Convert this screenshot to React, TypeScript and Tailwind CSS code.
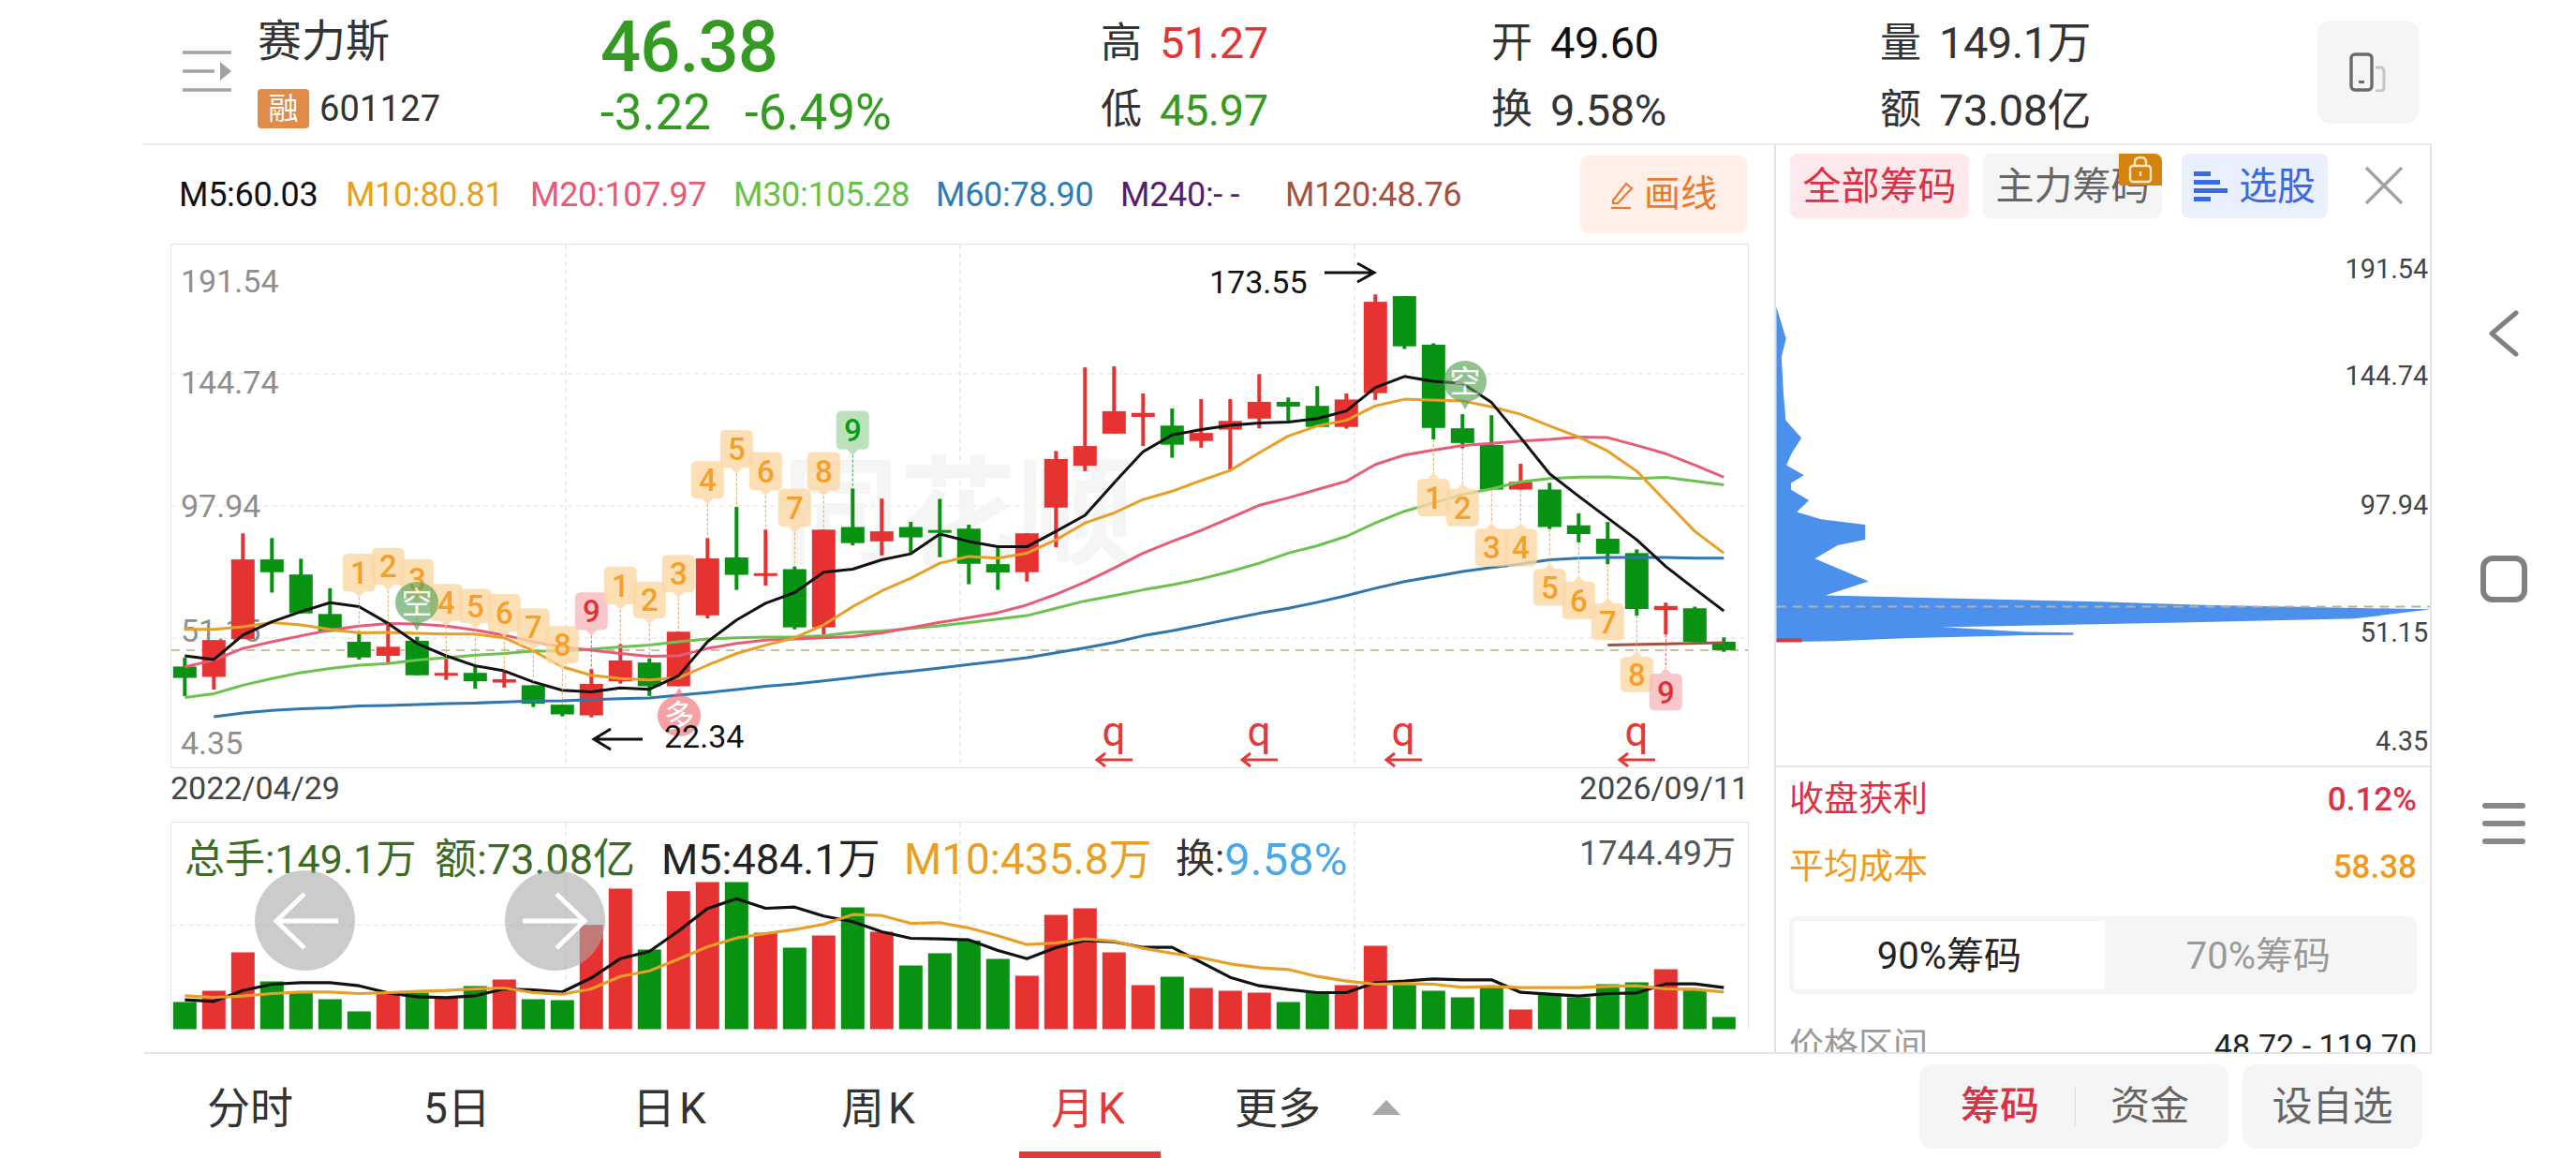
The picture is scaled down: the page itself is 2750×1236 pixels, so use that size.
import React from "react";

const Y = (z: number) => 260 + z / 2.8;
const VY = (z: number) => 860 + z / 3;
const CX = (i: number) => 197.3 + 31 * i;
const RED = "#e73232";
const GREEN = "#079311";

// colour, high, body top, body bottom, low (in reference-crop units)
const candles: [string, number, number, number, number][] = [
  ["G", 1237, 1264, 1298, 1352], ["R", 1185, 1185, 1295, 1333], ["R", 866, 944, 1182, 1182], ["G", 880, 944, 982, 1043],
  ["G", 942, 989, 1105, 1105], ["G", 1030, 1107, 1160, 1160], ["G", 1158, 1190, 1237, 1243], ["R", 1140, 1205, 1232, 1255],
  ["G", 1175, 1187, 1290, 1290], ["R", 1235, 1283, 1291, 1304], ["G", 1262, 1283, 1308, 1330], ["R", 1278, 1302, 1312, 1327],
  ["G", 1320, 1320, 1375, 1385], ["G", 1378, 1378, 1407, 1413], ["R", 1272, 1316, 1410, 1416], ["R", 1197, 1246, 1308, 1315],
  ["G", 1240, 1252, 1323, 1352], ["R", 1160, 1160, 1323, 1323], ["R", 880, 941, 1111, 1120], ["G", 787, 938, 990, 1035],
  ["R", 855, 985, 992, 1022], ["G", 965, 973, 1147, 1153], ["R", 855, 855, 1147, 1168], ["G", 732, 847, 895, 902],
  ["R", 762, 860, 890, 932], ["G", 832, 847, 878, 925], ["G", 763, 856, 864, 937], ["G", 840, 852, 957, 1018],
  ["G", 908, 958, 983, 1035], ["R", 866, 866, 982, 1010], ["R", 620, 644, 789, 908], ["R", 370, 605, 664, 680],
  ["R", 367, 501, 568, 568], ["R", 448, 506, 518, 605], ["G", 493, 544, 601, 640], ["R", 465, 566, 590, 610],
  ["R", 465, 530, 556, 675], ["R", 390, 473, 523, 552], ["G", 460, 473, 487, 530], ["G", 426, 485, 548, 548],
  ["R", 448, 466, 548, 553], ["R", 152, 174, 447, 467], ["G", 157, 157, 307, 315], ["G", 298, 302, 551, 585],
  ["G", 510, 552, 596, 612], ["G", 513, 602, 735, 735], ["R", 658, 712, 735, 735], ["G", 715, 735, 847, 853],
  ["G", 806, 842, 868, 893], ["G", 832, 882, 927, 958], ["G", 914, 925, 1092, 1112], ["R", 1073, 1083, 1095, 1168],
  ["G", 1085, 1090, 1190, 1192], ["G", 1177, 1190, 1215, 1220],
];

const m5 = [1232,1243,1170,1130,1100,1073,1085,1135,1195,1232,1262,1277,1310,1335,1340,1328,1332,1292,1190,1125,1075,1043,982,973,945,927,868,890,906,906,860,812,715,622,572,556,543,536,533,523,500,430,397,412,418,475,580,688,755,820,885,965,1032,1098];
const m10 = [1153,1153,1145,1133,1140,1153,1163,1162,1165,1167,1167,1178,1217,1265,1290,1300,1304,1298,1260,1225,1200,1178,1140,1085,1038,1000,955,935,940,925,885,835,805,765,740,708,678,625,575,545,528,485,465,468,470,488,510,545,578,620,680,770,860,925];
const m20 = [1265,1245,1210,1190,1172,1155,1143,1135,1137,1143,1155,1170,1190,1205,1215,1225,1233,1232,1210,1195,1185,1182,1178,1175,1163,1148,1132,1118,1103,1080,1048,1012,970,925,890,857,820,782,760,735,710,660,632,617,603,597,590,585,578,580,603,628,662,698];
const m30 = [1357,1345,1320,1300,1282,1270,1260,1255,1245,1238,1230,1225,1218,1218,1212,1205,1200,1190,1182,1178,1176,1176,1172,1162,1158,1150,1142,1133,1122,1112,1090,1068,1052,1035,1020,1002,980,955,925,903,875,835,800,775,750,733,712,702,698,697,702,699,710,721];
const m60 = [1414,1403,1395,1390,1387,1382,1380,1378,1375,1373,1370,1367,1366,1363,1360,1358,1350,1342,1333,1323,1316,1307,1297,1287,1278,1268,1258,1248,1238,1223,1208,1192,1172,1157,1140,1122,1105,1090,1072,1052,1030,1010,995,980,968,958,945,940,938,938,938,940,940];

const volTops = [627,591,468,561,597,618,657,600,597,610,576,555,618,621,380,264,459,272,243,243,405,453,414,324,402,510,471,430,489,543,348,327,468,573,546,582,591,597,627,597,573,447,570,591,612,580,651,600,612,570,564,522,590,675];
const volM5 = [620,625,590,570,565,565,575,598,610,613,607,585,588,595,550,488,465,400,328,296,327,323,352,370,402,423,425,428,462,488,453,430,434,452,452,500,548,575,587,597,597,565,560,553,556,556,596,602,608,600,598,569,569,581];
const volM10 = [607,612,608,600,595,595,600,597,593,590,585,582,597,602,585,545,527,490,450,422,408,395,378,347,350,375,373,390,415,443,438,425,432,455,471,485,505,517,523,545,560,570,568,570,580,577,581,581,581,577,575,585,586,595];

const pts = (a: number[], start = 0) => a.map((z, i) => `${CX(i + start).toFixed(1)},${Y(z).toFixed(1)}`).join(" ");
const vpts = (a: number[]) => a.map((z, i) => `${CX(i).toFixed(1)},${VY(z).toFixed(1)}`).join(" ");

// index, digit, rect top, rect bottom (crop units), high end of connector
const topBadges: [number, string, number, number, number, string?][] = [
  [6, "1", 927, 1040, 1158], [7, "2", 909, 1020, 1140], [8, "3", 943, 1060, 1175], [9, "4", 1017, 1128, 1235],
  [10, "5", 1032, 1135, 1262], [11, "6", 1047, 1160, 1278], [12, "7", 1090, 1200, 1320], [13, "8", 1143, 1255, 1378],
  [14, "9", 1042, 1155, 1272, "r"], [15, "1", 965, 1078, 1197], [16, "2", 1010, 1120, 1240], [17, "3", 930, 1042, 1160],
  [18, "4", 650, 762, 880], [19, "5", 557, 670, 787], [20, "6", 623, 737, 855], [21, "7", 733, 847, 965],
  [22, "8", 623, 738, 855], [23, "9", 500, 615, 732, "g"],
];
const bottomBadges: [number, string, number, number, number, string?][] = [
  [43, "1", 703, 815, 585], [44, "2", 733, 845, 612], [45, "3", 852, 965, 735], [46, "4", 852, 965, 735],
  [47, "5", 972, 1082, 853], [48, "6", 1010, 1122, 893], [49, "7", 1075, 1185, 958], [50, "8", 1235, 1340, 1112],
  [51, "9", 1285, 1395, 1168, "r"],
];

const profile = [[33,190],[56,285],[45,340],[50,450],[55,530],[93,583],[70,628],[57,665],[99,695],[68,718],[68,738],[111,770],[82,805],[140,827],[246,843],[246,888],[180,905],[125,945],[254,1013],[150,1055],[830,1075],[1080,1085],[1604,1097],[1420,1125],[980,1137],[540,1148],[430,1150],[630,1165],[745,1167],[745,1174],[635,1175],[310,1185],[175,1192],[33,1195]]
  .map(([x, y]) => `${(x / 2.24).toFixed(1)},${(y / 2.8).toFixed(1)}`).join(" ");

function Badge({ b, down }: { b: [number, string, number, number, number, string?]; down: boolean }) {
  const [i, d, top, bot, end, tone] = b;
  const x = CX(i);
  const fill = tone === "r" ? "#f6b9bc" : tone === "g" ? "#a9dcab" : "#fdd7a4";
  const ink = tone === "r" ? "#e0323a" : tone === "g" ? "#0c9a18" : "#f5a02a";
  const y0 = Y(top);
  const y1 = Y(bot);
  const hw = 17.5;
  const r = 6;
  const d1 = down
    ? `M${x - hw + r} ${y0}H${x + hw - r}Q${x + hw} ${y0} ${x + hw} ${y0 + r}V${y1 - r}Q${x + hw} ${y1} ${x + hw - r} ${y1}H${x + 6}L${x} ${y1 + 6}L${x - 6} ${y1}H${x - hw + r}Q${x - hw} ${y1} ${x - hw} ${y1 - r}V${y0 + r}Q${x - hw} ${y0} ${x - hw + r} ${y0}Z`
    : `M${x - hw + r} ${y0}H${x - 6}L${x} ${y0 - 6}L${x + 6} ${y0}H${x + hw - r}Q${x + hw} ${y0} ${x + hw} ${y0 + r}V${y1 - r}Q${x + hw} ${y1} ${x + hw - r} ${y1}H${x - hw + r}Q${x - hw} ${y1} ${x - hw} ${y1 - r}V${y0 + r}Q${x - hw} ${y0} ${x - hw + r} ${y0}Z`;
  return (
    <g>
      <line x1={x} x2={x} y1={down ? y1 + 6 : Y(end)} y2={down ? Y(end) : y0 - 6} stroke={tone === "r" ? "#d85a5a" : tone === "g" ? "#3aa84a" : "#e0a858"} strokeWidth={1} strokeDasharray="3 2" />
      <path d={d1} fill={fill} fillOpacity={0.8} />
      <text x={x} y={(y0 + y1) / 2 + 12} textAnchor="middle" fontSize={33} fontWeight={500} fill={ink}>{d}</text>
    </g>
  );
}

function Pin({ cx, cy, label, tone, up }: { cx: number; cy: number; label: string; tone: string; up?: boolean }) {
  return (
    <g opacity={0.62}>
      <ellipse cx={cx} cy={cy} rx={23} ry={22} fill={tone} />
      <path d={up ? `M${cx - 6} ${cy - 20}L${cx} ${cy - 30}L${cx + 6} ${cy - 20}Z` : `M${cx - 6} ${cy + 20}L${cx} ${cy + 30}L${cx + 6} ${cy + 20}Z`} fill={tone} />
      <text x={cx} y={cy + 12} textAnchor="middle" fontSize={33} fill="#ffffff">{label}</text>
    </g>
  );
}

function SellMark({ x }: { x: number }) {
  return (
    <g>
      <text x={x} y={796} textAnchor="middle" fontSize={44} fill="#e13a3a">q</text>
      <path d={`M${x + 20} 811H${x - 18}M${x - 9} 804L${x - 18} 811L${x - 9} 818`} fill="none" stroke="#e13a3a" strokeWidth={3} />
    </g>
  );
}

function MainChart() {
  return (
    <svg viewBox="183 261 1683 558" className="block h-full w-full">
      {[604, 1025, 1446].map((x) => <line key={x} x1={x} x2={x} y1={261} y2={819} stroke="#e2e2e2" strokeWidth={1.2} strokeDasharray="5 4" />)}
      {[399, 540, 681].map((y) => <line key={y} x1={183} x2={1866} y1={y} y2={y} stroke="#e2e2e2" strokeWidth={1.2} strokeDasharray="5 4" />)}
      <text x={835} y={592} fontSize={125} fontWeight={700} fill="#f5f5f5" textLength={375}>同花顺</text>
      <g fill="#8e8e8e" fontSize={34}>
        <text x={193} y={312}>191.54</text>
        <text x={193} y={420}>144.74</text>
        <text x={193} y={552}>97.94</text>
        <text x={193} y={685}>51.15</text>
        <text x={193} y={805}>4.35</text>
      </g>
      <line x1={183} x2={1866} y1={694} y2={694} stroke="#c2a878" strokeWidth={1.6} strokeDasharray="9 7" />
      {candles.map(([c, hi, top, bot, lo], i) => {
        const fill = c === "R" ? RED : GREEN;
        const x = CX(i);
        return (
          <g key={i} fill={fill}>
            <rect x={x - 2} y={Y(hi)} width={4} height={Y(lo) - Y(hi)} />
            <rect x={x - 12.5} y={Y(top)} width={25} height={Math.max(Y(bot) - Y(top), 3)} />
          </g>
        );
      })}
      <g fill="none" strokeWidth={3} strokeLinejoin="round">
        <polyline points={pts(m60, 1)} stroke="#2e76ad" />
        <polyline points={pts(m30)} stroke="#6cc24f" />
        <polyline points={pts(m20)} stroke="#e85c78" />
        <polyline points={pts(m10)} stroke="#e89f28" />
        <polyline points={pts(m5)} stroke="#111111" />
        <polyline points={`${CX(49)},${Y(1200)} ${CX(53)},${Y(1193)}`} stroke="#a9503c" />
      </g>
      {topBadges.map((b) => <Badge key={"t" + b[0]} b={b} down />)}
      {bottomBadges.map((b) => <Badge key={"b" + b[0]} b={b} down={false} />)}
      <Pin cx={445} cy={643} label="空" tone="#4fa04f" />
      <Pin cx={1564} cy={407} label="空" tone="#4fa04f" />
      <Pin cx={725} cy={764} label="多" tone="#ee6a6e" up />
      <path d="M686 789H634M652 778L634 789L652 800" fill="none" stroke="#111" strokeWidth={3} />
      <text x={709} y={798} fontSize={34} fill="#111">22.34</text>
      <text x={1291} y={313} fontSize={34} fill="#111">173.55</text>
      <path d="M1414 291H1467M1449 281L1467 291L1449 301" fill="none" stroke="#111" strokeWidth={3} />
      {[1189, 1344, 1498, 1747].map((x) => <SellMark key={x} x={x} />)}
    </svg>
  );
}

function VolumeChart() {
  return (
    <svg viewBox="183 878 1683 220" className="block h-full w-full">
      {[604, 1025, 1446].map((x) => <line key={x} x1={x} x2={x} y1={878} y2={1098} stroke="#e2e2e2" strokeWidth={1.2} strokeDasharray="5 4" />)}
      <line x1={183} x2={1866} y1={987} y2={987} stroke="#e2e2e2" strokeWidth={1.2} strokeDasharray="5 4" />
      {volTops.map((z, i) => (
        <rect key={i} x={CX(i) - 12.5} y={VY(z)} width={25} height={1098 - VY(z)} fill={candles[i][0] === "R" ? RED : GREEN} />
      ))}
      <g fill="none" strokeWidth={3.2} strokeLinejoin="round">
        <polyline points={vpts(volM5)} stroke="#111111" />
        <polyline points={vpts(volM10)} stroke="#e89f28" />
      </g>
    </svg>
  );
}

function ArrowCircle({ dir, className }: { dir: "l" | "r"; className: string }) {
  return (
    <div className={`absolute top-[51px] flex h-[107px] w-[107px] items-center justify-center rounded-full bg-[#a8a8a8]/60 ${className}`}>
      <svg width="74" height="64" viewBox="0 0 74 64" fill="none" stroke="#ffffff" strokeWidth="5">
        {dir === "l" ? <path d="M72 32H6M36 3L6 32L36 61" /> : <path d="M2 32H68M38 3L68 32L38 61" />}
      </svg>
    </div>
  );
}

function StatRow({ label, value, color }: { label: string; value: string; color: string }) {
  return (
    <div className="flex h-[76px] items-center">
      <span className="w-[63px] text-[44px] leading-none text-[#333333]">{label}</span>
      <span className={`text-[47px] leading-none tracking-[-0.5px] ${color}`}>{value}</span>
    </div>
  );
}

const legend = [
  { t: "M5:60.03", c: "text-[#111111]", w: "w-[178px]" },
  { t: "M10:80.81", c: "text-[#e8a023]", w: "w-[197px]" },
  { t: "M20:107.97", c: "text-[#ea5a74]", w: "w-[217px]" },
  { t: "M30:105.28", c: "text-[#66c24a]", w: "w-[216px]" },
  { t: "M60:78.90", c: "text-[#2e7cb2]", w: "w-[197px]" },
  { t: "M240:- -", c: "text-[#5a1b69]", w: "w-[176px]" },
  { t: "M120:48.76", c: "text-[#a8503c]", w: "w-[200px]" },
];

export default function App() {
  return (
    <div className="flex h-[1236px] w-[2750px] overflow-hidden bg-white pl-[153px] font-[family-name:Roboto,'Noto_Sans_CJK_SC',sans-serif] text-[#333333]">
      <div className="flex w-[2443px] flex-col">
        {/* header */}
        <header className="flex h-[155px] shrink-0 border-b-2 border-[#ececec]">
          <div className="ml-[42px] flex w-[80px] shrink-0 pt-[54px]">
            <svg width="54" height="46" viewBox="0 0 54 46" fill="none" stroke="#a2a2a2" strokeWidth="3.4">
              <path d="M0 2H52M0 22H34M0 42H52" />
              <path d="M40 12L52 22L40 32Z" fill="#a2a2a2" stroke="none" />
            </svg>
          </div>
          <div className="flex w-[366px] shrink-0 flex-col pt-[8px]">
            <div className="flex h-[72px] items-center text-[47px] leading-none text-[#333333]">赛力斯</div>
            <div className="flex h-[76px] items-center gap-[11px]">
              <span className="flex h-[42px] w-[55px] items-center justify-center rounded-[4px] bg-[#e08b47] text-[32px] leading-none text-white">融</span>
              <span className="text-[38px] leading-none tracking-[0.2px] text-[#333333]">601127</span>
            </div>
          </div>
          <div className="flex w-[534px] shrink-0 flex-col pt-[11px] text-[#359a22]">
            <div className="flex h-[80px] items-center text-[76px] font-medium leading-none tracking-[-1px]">46.38</div>
            <div className="flex h-[66px] items-center gap-[36px] text-[53px] leading-none">
              <span>-3.22</span>
              <span>-6.49%</span>
            </div>
          </div>
          <div className="flex w-[417px] shrink-0 flex-col pt-[10px]">
            <StatRow label="高" value="51.27" color="text-[#e23636]" />
            <StatRow label="低" value="45.97" color="text-[#359a22]" />
          </div>
          <div className="flex w-[415px] shrink-0 flex-col pt-[10px]">
            <StatRow label="开" value="49.60" color="text-[#111111]" />
            <StatRow label="换" value="9.58%" color="text-[#333333]" />
          </div>
          <div className="flex w-[467px] shrink-0 flex-col pt-[10px]">
            <StatRow label="量" value="149.1万" color="text-[#333333]" />
            <StatRow label="额" value="73.08亿" color="text-[#333333]" />
          </div>
          <div className="mt-[22px] flex h-[110px] w-[108px] shrink-0 items-center justify-center rounded-[14px] bg-[#f5f5f5]">
            <svg width="40" height="42" viewBox="0 0 40 42" fill="none">
              <path d="M28 16H33Q37 16 37 20V37Q37 41 33 41H28" stroke="#c6c6c6" strokeWidth="3" />
              <rect x="2" y="2" width="22" height="38" rx="4" stroke="#6a6a6a" strokeWidth="3.4" />
              <rect x="10" y="30" width="6" height="3" fill="#6a6a6a" />
            </svg>
          </div>
        </header>

        {/* body */}
        <div className="flex h-[970px] shrink-0 border-b-2 border-[#e6e6e6]">
          <div className="flex w-[1741px] shrink-0 flex-col pl-[29px]">
            <div className="flex h-[105px] shrink-0 items-start justify-between pr-[29px]">
              <div className="flex h-[106px] items-center pl-[9px] text-[36px] leading-none tracking-[-0.3px]">
                {legend.map((l) => <span key={l.t} className={`${l.w} ${l.c}`}>{l.t}</span>)}
              </div>
              <div className="mt-[11px] flex h-[83px] w-[178px] shrink-0 items-center justify-center gap-[9px] rounded-[8px] bg-[#ffefe8] text-[39px] leading-none text-[#ec7a2e]">
                <svg width="27" height="30" viewBox="0 0 27 30" fill="none" stroke="#ec7a2e" strokeWidth="2.2">
                  <path d="M3 21L17 3L23 8L8 24H3Z" />
                  <path d="M1 29H22" />
                </svg>
                <span>画线</span>
              </div>
            </div>
            <div className="h-[560px] w-[1685px] shrink-0 border border-[#e4e4e4]">
              <MainChart />
            </div>
            <div className="flex h-[57px] w-[1685px] shrink-0 items-center justify-between pb-[16px] text-[34px] leading-none text-[#444444]">
              <span>2022/04/29</span>
              <span>2026/09/11</span>
            </div>
            <div className="relative h-[222px] w-[1685px] shrink-0 border border-b-0 border-[#e4e4e4]">
              <VolumeChart />
              <div className="absolute left-[14px] top-[15px] flex h-[48px] items-center leading-none">
                <span className="w-[267px] text-[43px] text-[#3d6b24]">总手:149.1万</span>
                <span className="w-[242px] text-[45px] text-[#3d6b24]">额:73.08亿</span>
                <span className="w-[259px] text-[45px] text-[#222222]">M5:484.1万</span>
                <span className="w-[290px] text-[46px] text-[#e79f26]">M10:435.8万</span>
                <span className="text-[42px] text-[#333333]">换:</span>
                <span className="text-[49px] text-[#4aa8e8]">9.58%</span>
              </div>
              <span className="absolute right-[13px] top-[15px] text-[36px] leading-none text-[#555555]">1744.49万</span>
              <ArrowCircle dir="l" className="left-[89px]" />
              <ArrowCircle dir="r" className="left-[356px]" />
            </div>
          </div>

          {/* right panel */}
          <aside className="flex w-[702px] shrink-0 flex-col overflow-hidden border-x-2 border-[#e2e2e2]">
            <div className="flex h-[90px] shrink-0 items-start gap-[15px] pl-[15px] pt-[9px] text-[41px] leading-none">
              <div className="flex h-[69px] w-[191px] items-center justify-center rounded-[8px] bg-[#fde8ec] pt-[2px] text-[#dc3045]">全部筹码</div>
              <div className="relative flex h-[69px] w-[191px] items-center justify-center rounded-[8px] bg-[#f5f5f5] pt-[2px] text-[#666666]">
                主力筹码
                <span className="absolute right-0 top-0 flex h-[34px] w-[46px] items-center justify-center rounded-bl-[2px] rounded-tr-[8px] bg-[#d4830f]">
                  <svg width="28" height="30" viewBox="0 0 28 30" fill="none" stroke="#ffe9c8" strokeWidth="2.4">
                    <path d="M8 11V7Q8 2 14 2T20 7V11" />
                    <rect x="3" y="11" width="22" height="17" rx="3" />
                    <path d="M14 17V22" />
                  </svg>
                </span>
              </div>
              <div className="ml-[6px] flex h-[69px] w-[156px] items-center justify-center gap-[12px] rounded-[8px] bg-[#e9effd] pt-[2px] text-[#3a6ae0]">
                <svg width="36" height="36" viewBox="0 0 36 36" fill="#3a6ae0">
                  <rect x="0" y="1" width="18" height="5" />
                  <rect x="0" y="10" width="28" height="5" />
                  <rect x="0" y="19" width="36" height="5" />
                  <rect x="0" y="28" width="18" height="5" />
                </svg>
                <span>选股</span>
              </div>
              <svg className="ml-[24px] mt-[14px]" width="42" height="40" viewBox="0 0 42 40" stroke="#a2a2a2" strokeWidth="3.4">
                <path d="M2 1L40 39M40 1L2 39" />
              </svg>
            </div>
            <div className="h-[574px] shrink-0 border-b-2 border-[#e4e4e4]">
              <svg viewBox="1895 245 699 574" className="block h-full w-full">
                <g transform="translate(1880 260)">
                  <polygon points={profile} fill="#4b90ec" />
                </g>
                <rect x={1895} y={683} width={27} height={4} fill="#cf3c3c" />
                <line x1={1895} x2={2596} y1={649} y2={649} stroke="#b5b0a0" strokeWidth={2} strokeDasharray="10 7" />
                <g fontSize={29} fill="#444444" textAnchor="end">
                  <text x={2593} y={297}>191.54</text>
                  <text x={2593} y={412}>144.74</text>
                  <text x={2593} y={550}>97.94</text>
                  <text x={2593} y={687}>51.15</text>
                  <text x={2593} y={803}>4.35</text>
                </g>
              </svg>
            </div>
            <div className="flex flex-col px-[14px] text-[37px] leading-none">
              <div className="mt-[15px] flex h-[38px] items-center justify-between text-[#dc3045]">
                <span>收盘获利</span>
                <span className="text-[35px] font-medium">0.12%</span>
              </div>
              <div className="mt-[34px] flex h-[38px] items-center justify-between text-[#f19a22]">
                <span>平均成本</span>
                <span className="text-[35px] font-medium">58.38</span>
              </div>
              <div className="mt-[34px] flex h-[83px] shrink-0 rounded-[8px] bg-[#f5f5f5] p-[5px] text-[40px]">
                <div className="flex w-[332px] items-center justify-center rounded-[4px] bg-white pt-[2px] text-[#222222]">90%筹码</div>
                <div className="flex flex-1 items-center justify-center pt-[2px] text-[#999999]">70%筹码</div>
              </div>
              <div className="mt-[36px] flex h-[38px] items-center justify-between">
                <span className="text-[#999999]">价格区间</span>
                <span className="text-[34px] text-[#222222]">48.72 - 119.70</span>
              </div>
            </div>
          </aside>
        </div>

        {/* footer */}
        <footer className="flex h-[111px] shrink-0 items-start">
          <div className="flex h-full w-[1896px] shrink-0 text-[46px] leading-none text-[#333333]">
            <span className="ml-[68px] mt-[35px] w-[231px]">分时</span>
            <span className="mt-[35px] w-[223px]">5日</span>
            <span className="mt-[35px] w-[223px] tracking-[4px]">日K</span>
            <span className="mt-[35px] w-[190px] tracking-[4px]">周K</span>
            <div className="flex h-full w-[151px] flex-col items-center border-b-[7px] border-[#e23a3a] pt-[35px]">
              <span className="tracking-[4px] text-[#e03a3a]">月K</span>
            </div>
            <span className="ml-[79px] mt-[35px] w-[147px]">更多</span>
            <svg className="mt-[49px]" width="30" height="16" viewBox="0 0 30 16" fill="#a8a8a8">
              <path d="M15 0L30 16H0Z" />
            </svg>
          </div>
          <div className="mt-[11px] flex h-[90px] w-[330px] shrink-0 items-center rounded-[14px] bg-[#f5f5f5] text-[42px] leading-none">
            <span className="ml-[44px] w-[84px] font-medium text-[#dc3045]">筹码</span>
            <span className="ml-[38px] h-[42px] w-px bg-[#dddddd]" />
            <span className="ml-[37px] text-[#666666]">资金</span>
          </div>
          <div className="ml-[15px] mt-[11px] flex h-[90px] w-[192px] shrink-0 items-center justify-center rounded-[14px] bg-[#f5f5f5] text-[43px] leading-none text-[#666666]">设自选</div>
        </footer>
      </div>

      {/* system navigation */}
      <nav className="flex w-[154px] shrink-0 flex-col items-center pt-[331px]">
        <svg width="32" height="50" viewBox="0 0 32 50" fill="none" stroke="#808080" strokeWidth="5" strokeLinecap="round" strokeLinejoin="round">
          <path d="M29 3L3 25L29 47" />
        </svg>
        <div className="mt-[212px] h-[50px] w-[50px] rounded-[13px] border-[6px] border-[#808080]" />
        <div className="mt-[214px] flex w-[46px] flex-col gap-[13px]">
          <span className="h-[6px] rounded-full bg-[#888888]" />
          <span className="h-[6px] rounded-full bg-[#888888]" />
          <span className="h-[6px] rounded-full bg-[#888888]" />
        </div>
      </nav>
    </div>
  );
}
